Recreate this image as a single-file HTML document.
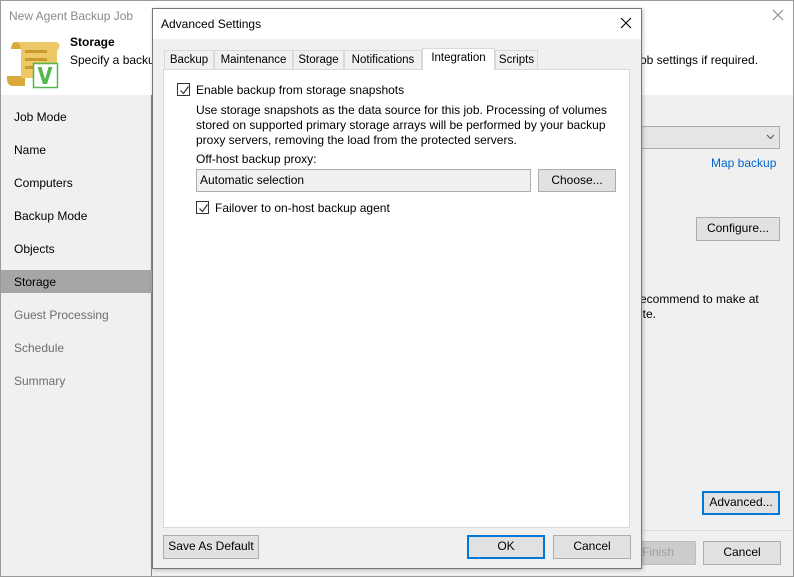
<!DOCTYPE html>
<html><head><style>
*{box-sizing:border-box;margin:0;padding:0}
body{width:794px;height:577px;position:relative;overflow:hidden;font-family:"Liberation Sans",sans-serif;font-size:12px;color:#000;background:#f0f0f0}
.a{position:absolute}
.btn{position:absolute;background:#e1e1e1;border:1px solid #adadad;text-align:center;line-height:21px;font-size:12px}
.blue{border:2px solid #0078d7;line-height:19px}
.cb{position:absolute;width:13px;height:13px;border:1px solid #333;background:#fff}
.cb svg{position:absolute;left:1px;top:1px}
.tab{position:absolute;top:50px;height:19px;border:1px solid #d9d9d9;border-bottom:none;background:#f0f0f0;line-height:18px;text-align:center;font-size:11.5px}
</style></head><body>
<div class="a" style="left:0;top:0;width:794px;height:577px;border:1px solid #9a9a9a;background:#f0f0f0"></div>
<div class="a" style="left:1px;top:1px;width:792px;height:94px;background:#fff"></div>
<div class="a" style="left:9px;top:9px;color:#8a8a8a">New Agent Backup Job</div>
<svg class="a" style="left:772px;top:9px" width="12" height="12"><path d="M1 1l10 10M11 1L1 11" stroke="#8a8a8a" stroke-width="1.1"/></svg>
<svg class="a" style="left:5px;top:40px" width="58" height="50">
<path d="M10 2h40c5 0 6 5 2 9v27H16V9c0-4-3-7-6-7z" fill="#edc867"/>
<path d="M16 38h4v8H8c-4 0-6-3-6-7v-3h14z" fill="#d9a93a"/>
<path d="M10 2c3 0 6 3 6 7H6c0-4 2-7 4-7z" fill="#d9a93a"/>
<rect x="20" y="10" width="22" height="3" fill="#c99a30"/><rect x="20" y="18" width="22" height="3" fill="#c99a30"/><rect x="20" y="26" width="10" height="3" fill="#c99a30"/>
<rect x="28.5" y="23.5" width="24" height="24" fill="#fff" stroke="#54b84a" stroke-width="1.5"/>
<path d="M32.5 27l5.5 17h4l5.5-17h-4l-3.5 12-3.5-12z" fill="#54b84a"/>
</svg>
<div class="a" style="left:70px;top:35px;font-weight:bold">Storage</div>
<div class="a" style="left:70px;top:53px">Specify a backu</div>
<div class="a" style="left:640px;top:53px">ob settings if required.</div>
<div class="a" style="left:1px;top:95px;width:151px;height:481px;background:#f0f0f0;border-right:1px solid #8a8a8a"></div>
<div class="a" style="left:14px;top:110px">Job Mode</div>
<div class="a" style="left:14px;top:143px">Name</div>
<div class="a" style="left:14px;top:176px">Computers</div>
<div class="a" style="left:14px;top:209px">Backup Mode</div>
<div class="a" style="left:14px;top:242px">Objects</div>
<div class="a" style="left:1px;top:270px;width:151px;height:23px;background:#a6a6a6"></div>
<div class="a" style="left:14px;top:275px">Storage</div>
<div class="a" style="left:14px;top:308px;color:#6d6d6d">Guest Processing</div>
<div class="a" style="left:14px;top:341px;color:#6d6d6d">Schedule</div>
<div class="a" style="left:14px;top:374px;color:#6d6d6d">Summary</div>
<div class="a" style="left:630px;top:126px;width:150px;height:23px;background:#e5e5e5;border:1px solid #adadad"></div>
<svg class="a" style="left:766px;top:134px" width="9" height="6"><path d="M1 1l3.5 3.5L8 1" fill="none" stroke="#555"/></svg>
<div class="a" style="left:711px;top:156px;color:#0066cc">Map backup</div>
<div class="btn" style="left:696px;top:217px;width:84px;height:24px">Configure...</div>
<div class="a" style="left:640px;top:292px">ecommend to make at</div>
<div class="a" style="left:640px;top:307px">ite.</div>
<div class="btn blue" style="left:702px;top:491px;width:78px;height:24px">Advanced...</div>
<div class="a" style="left:630px;top:530px;width:163px;height:1px;background:#dcdcdc"></div>
<div class="btn" style="left:620px;top:541px;width:76px;height:24px;background:#cccccc;border-color:#bfbfbf;color:#a0a0a0">Finish</div>
<div class="btn" style="left:703px;top:541px;width:78px;height:24px">Cancel</div>

<!-- dialog -->
<div class="a" style="left:152px;top:8px;width:490px;height:561px;border:1px solid #777;background:#f0f0f0;box-shadow:1px 1px 4px rgba(0,0,0,.25)"></div>
<div class="a" style="left:153px;top:9px;width:488px;height:30px;background:#fff"></div>
<div class="a" style="left:161px;top:17px">Advanced Settings</div>
<svg class="a" style="left:620px;top:17px" width="12" height="12"><path d="M1 1l10 10M11 1L1 11" stroke="#000" stroke-width="1.1"/></svg>
<div class="a" style="left:163px;top:69px;width:467px;height:459px;background:#fff;border:1px solid #d9d9d9"></div>
<div class="tab" style="left:164px;width:50px">Backup</div>
<div class="tab" style="left:214px;width:79px">Maintenance</div>
<div class="tab" style="left:293px;width:51px">Storage</div>
<div class="tab" style="left:344px;width:78px">Notifications</div>
<div class="tab" style="left:422px;top:48px;height:22px;width:73px;background:#fff">Integration</div>
<div class="tab" style="left:495px;width:43px">Scripts</div>
<div class="cb" style="left:177px;top:83px"><svg width="11" height="11"><path d="M1.5 5.5l3 3 5-7" fill="none" stroke="#333" stroke-width="1.2"/></svg></div>
<div class="a" style="left:196px;top:83px">Enable backup from storage snapshots</div>
<div class="a" style="left:196px;top:103px;line-height:15px;width:430px">Use storage snapshots as the data source for this job. Processing of volumes stored on supported primary storage arrays will be performed by your backup proxy servers, removing the load from the protected servers.</div>
<div class="a" style="left:196px;top:152px">Off-host backup proxy:</div>
<div class="a" style="left:196px;top:169px;width:335px;height:23px;background:#f0f0f0;border:1px solid #adadad;padding:3px 3px;line-height:15px">Automatic selection</div>
<div class="btn" style="left:538px;top:169px;width:78px;height:23px;line-height:20px">Choose...</div>
<div class="cb" style="left:196px;top:201px"><svg width="11" height="11"><path d="M1.5 5.5l3 3 5-7" fill="none" stroke="#333" stroke-width="1.2"/></svg></div>
<div class="a" style="left:215px;top:201px">Failover to on-host backup agent</div>
<div class="btn" style="left:163px;top:535px;width:96px;height:24px">Save As Default</div>
<div class="btn blue" style="left:467px;top:535px;width:78px;height:24px">OK</div>
<div class="btn" style="left:553px;top:535px;width:78px;height:24px">Cancel</div>
</body></html>
